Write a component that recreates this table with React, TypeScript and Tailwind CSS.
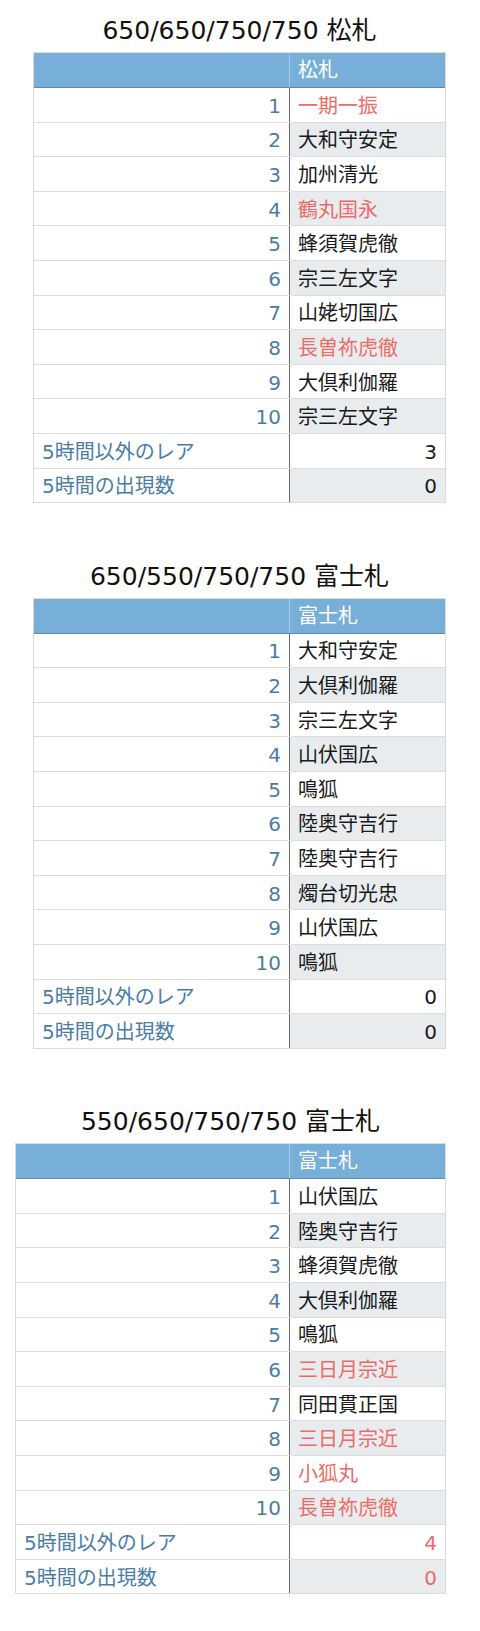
import { clsx } from 'clsx';

interface Row {
    label: string;
    value: string;
    hot?: boolean;
}

interface Sheet {
    title: string;
    head: string;
    wide?: boolean;
    rows: Row[];
    rare: string;
    count: string;
    hotTotals?: boolean;
}

const sheets: Sheet[] = [
    {
        title: '650/650/750/750 松札',
        head: '松札',
        rows: [
            { label: '1', value: '一期一振', hot: true },
            { label: '2', value: '大和守安定' },
            { label: '3', value: '加州清光' },
            { label: '4', value: '鶴丸国永', hot: true },
            { label: '5', value: '蜂須賀虎徹' },
            { label: '6', value: '宗三左文字' },
            { label: '7', value: '山姥切国広' },
            { label: '8', value: '長曽祢虎徹', hot: true },
            { label: '9', value: '大倶利伽羅' },
            { label: '10', value: '宗三左文字' },
        ],
        rare: '3',
        count: '0',
    },
    {
        title: '650/550/750/750 富士札',
        head: '富士札',
        rows: [
            { label: '1', value: '大和守安定' },
            { label: '2', value: '大倶利伽羅' },
            { label: '3', value: '宗三左文字' },
            { label: '4', value: '山伏国広' },
            { label: '5', value: '鳴狐' },
            { label: '6', value: '陸奥守吉行' },
            { label: '7', value: '陸奥守吉行' },
            { label: '8', value: '燭台切光忠' },
            { label: '9', value: '山伏国広' },
            { label: '10', value: '鳴狐' },
        ],
        rare: '0',
        count: '0',
    },
    {
        title: '550/650/750/750 富士札',
        head: '富士札',
        wide: true,
        rows: [
            { label: '1', value: '山伏国広' },
            { label: '2', value: '陸奥守吉行' },
            { label: '3', value: '蜂須賀虎徹' },
            { label: '4', value: '大倶利伽羅' },
            { label: '5', value: '鳴狐' },
            { label: '6', value: '三日月宗近', hot: true },
            { label: '7', value: '同田貫正国' },
            { label: '8', value: '三日月宗近', hot: true },
            { label: '9', value: '小狐丸', hot: true },
            { label: '10', value: '長曽祢虎徹', hot: true },
        ],
        rare: '4',
        count: '0',
        hotTotals: true,
    },
];

function SheetTable({ sheet }: { sheet: Sheet }) {
    return (
        <section className={clsx('flex flex-col', sheet.wide ? 'ml-[15px] w-[431px]' : 'ml-[33px] w-[413px]')}>
            <h2 className="text-center text-[25px] leading-[30px] text-[#111] mb-[6px] font-normal">
                {sheet.title}
            </h2>
            <div className="border border-[#dcdcdc] text-[20px]">
                {/* Header */}
                <div className="flex h-[35px] bg-[#77afd9] border-b border-[#5b8bb3]">
                    <div className="flex-1" />
                    <div className="w-[156px] border-l border-[#a9cbe6] flex items-center pl-[8px] text-white">
                        {sheet.head}
                    </div>
                </div>

                {sheet.rows.map((row, i) => (
                    <div key={i} className="flex h-[34.6px] border-b border-[#dcdcdc]">
                        <div className="flex-1 flex items-center justify-end pr-[8px] pt-[2px] text-[#4a7da6]">
                            {row.label}
                        </div>
                        <div
                            className={clsx(
                                'w-[156px] border-l border-[#6a6a6a] flex items-center pl-[8px] pt-[2px]',
                                i % 2 === 1 ? 'bg-[#e8ecef]' : 'bg-white',
                                row.hot ? 'text-[#ee6a66]' : 'text-[#1a1a1a]'
                            )}
                        >
                            {row.value}
                        </div>
                    </div>
                ))}

                {/* Totals */}
                <div className="flex h-[34.6px] border-b border-[#dcdcdc]">
                    <div className="flex-1 flex items-center pl-[8px] pt-[2px] text-[#4a7da6]">5時間以外のレア</div>
                    <div className={clsx('w-[156px] border-l border-[#6a6a6a] flex items-center justify-end pr-[8px] pt-[2px] bg-white', sheet.hotTotals ? 'text-[#ee6a66]' : 'text-[#1a1a1a]')}>
                        {sheet.rare}
                    </div>
                </div>
                <div className="flex h-[33.6px]">
                    <div className="flex-1 flex items-center pl-[8px] pt-[2px] text-[#4a7da6]">5時間の出現数</div>
                    <div className={clsx('w-[156px] border-l border-[#6a6a6a] flex items-center justify-end pr-[8px] pt-[2px] bg-[#e8ecef]', sheet.hotTotals ? 'text-[#ee6a66]' : 'text-[#1a1a1a]')}>
                        {sheet.count}
                    </div>
                </div>
            </div>
        </section>
    );
}

export default function App() {
    return (
        <div className="w-[480px] min-h-[1631px] bg-white pt-[16px] flex flex-col gap-[58.5px] font-['DejaVu_Sans','Noto_Sans_CJK_JP',sans-serif]">
            {sheets.map((s) => (
                <SheetTable key={s.title} sheet={s} />
            ))}
        </div>
    );
}
